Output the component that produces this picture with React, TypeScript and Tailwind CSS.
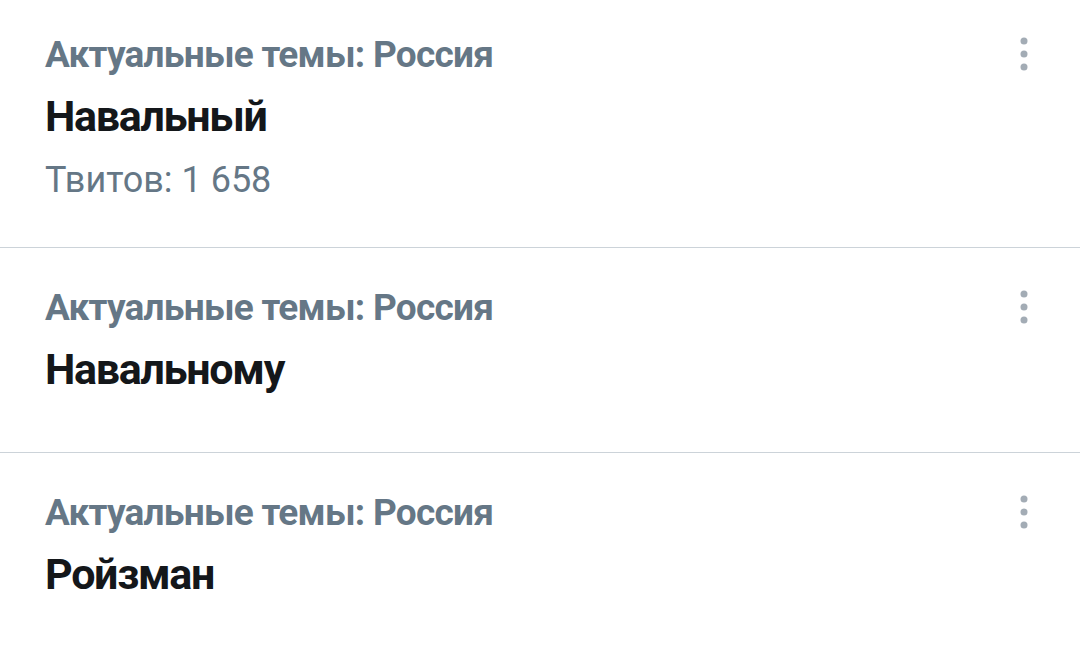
import React from 'react';

type Trend = {
  id: number;
  category: string;
  name: string;
  tweets?: string;
};

const trends: Trend[] = [
  { id: 1, category: 'Актуальные темы: Россия', name: 'Навальный', tweets: 'Твитов: 1 658' },
  { id: 2, category: 'Актуальные темы: Россия', name: 'Навальному' },
  { id: 3, category: 'Актуальные темы: Россия', name: 'Ройзман' },
];

const MoreIcon: React.FC = () => (
  <svg width="14" height="40" viewBox="0 0 14 40" className="text-[#a3acb5]">
    <circle cx="7" cy="7" r="3.5" fill="currentColor" />
    <circle cx="7" cy="20" r="3.5" fill="currentColor" />
    <circle cx="7" cy="33" r="3.5" fill="currentColor" />
  </svg>
);

const TrendRow: React.FC<{ trend: Trend; first: boolean }> = ({ trend, first }) => (
  <div
    className={`flex justify-between pl-[45px] pr-[49px] ${first ? 'pt-[33px] pb-[42px]' : 'pt-[38px] pb-[44px] border-t-[1.5px] border-[#ccd3d9]'}`}
  >
    <div className="flex flex-col">
      <div className="text-[37px] leading-[44px] font-bold tracking-[-0.75px] text-[#657786]">{trend.category}</div>
      <div className="text-[43px] leading-[78px] font-bold tracking-[-1.3px] text-[#14171a]">{trend.name}</div>
      {trend.tweets && (
        <div className="text-[36px] leading-[50px] text-[#657786]">{trend.tweets}</div>
      )}
    </div>
    <div className="pt-[1px]">
      <MoreIcon />
    </div>
  </div>
);

const App: React.FC = () => {
  return (
    <div className="w-[1080px] h-[652px] overflow-hidden bg-white font-['Roboto',sans-serif]">
      {trends.map((t, i) => (
        <TrendRow key={t.id} trend={t} first={i === 0} />
      ))}
    </div>
  );
};

export default App;
